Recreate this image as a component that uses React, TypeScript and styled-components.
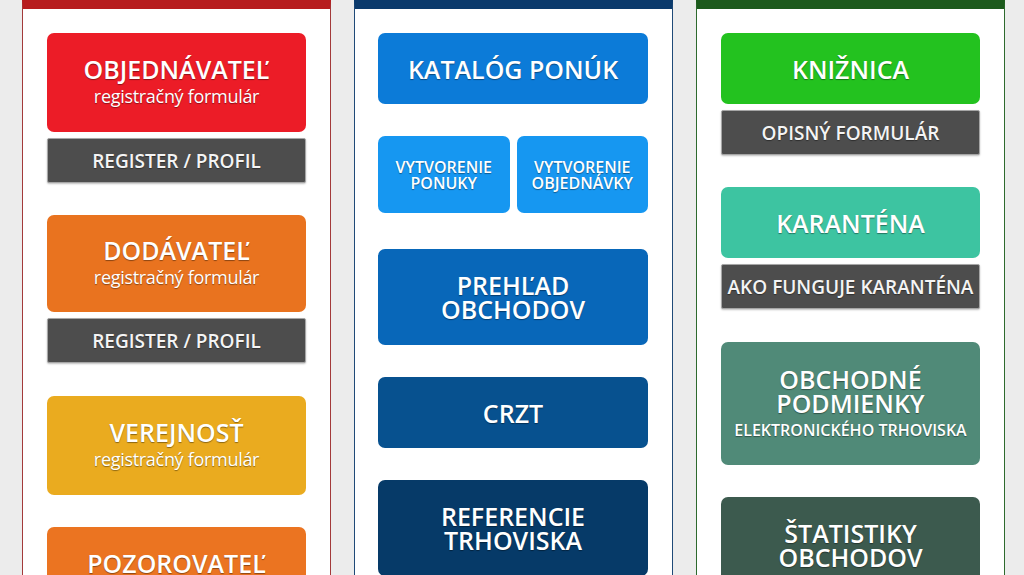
import styled, { createGlobalStyle } from "styled-components";

const GlobalStyle = createGlobalStyle`
  html, body {
    margin: 0;
    padding: 0;
    background: #ececec;
    font-family: "Open Sans", "Noto Sans", sans-serif;
    height: 575px;
    overflow: hidden;
  }
`;

type Tile = {
  title: string[];
  sub?: string;
  small?: string;
  bg: string;
  h: number;
  button?: string;
  gap?: number;
};

const leftTiles: Tile[] = [
  { title: ["OBJEDNÁVATEĽ"], sub: "registračný formulár", bg: "#ec1c27", h: 99, button: "REGISTER / PROFIL" },
  { title: ["DODÁVATEĽ"], sub: "registračný formulár", bg: "#e9731f", h: 97, button: "REGISTER / PROFIL" },
  { title: ["VEREJNOSŤ"], sub: "registračný formulár", bg: "#eaab1f", h: 99, gap: 33 },
  { title: ["POZOROVATEĽ"], sub: "registračný formulár", bg: "#eb7421", h: 99 },
];

const rightTiles: Tile[] = [
  { title: ["KNIŽNICA"], bg: "#23c21f", h: 71, button: "OPISNÝ FORMULÁR" },
  { title: ["KARANTÉNA"], bg: "#3dc4a1", h: 71, button: "AKO FUNGUJE KARANTÉNA" },
  { title: ["OBCHODNÉ", "PODMIENKY"], small: "ELEKTRONICKÉHO TRHOVISKA", bg: "#508a78", h: 123, gap: 33 },
  { title: ["ŠTATISTIKY", "OBCHODOV"], bg: "#3c5a4e", h: 96 },
];

const App = () => {
  return (
    <>
      <GlobalStyle />
      <Page>
        <Panel accent="#b71c1e" border="#a33a3a" width={309}>
          <Column>
            {leftTiles.map((t, i) => (
              <Group key={i} gap={i === 0 ? 0 : t.gap ?? 32}>
                <BigTile bg={t.bg} h={t.h} lift={t.sub ? 4 : 0}>
                  <Title>{t.title[0]}</Title>
                  {t.sub && <Sub>{t.sub}</Sub>}
                </BigTile>
                {t.button && <GrayButton>{t.button}</GrayButton>}
              </Group>
            ))}
          </Column>
        </Panel>

        <Panel accent="#0b3a6c" border="#1f4a78" width={319}>
          <Column wide>
            <Group gap={0}>
              <BigTile bg="#0c7bd8" h={71}>
                <Title>KATALÓG PONÚK</Title>
              </BigTile>
            </Group>
            <Group gap={32}>
              <SmallRow>
                <SmallTile>
                  VYTVORENIE
                  <br />
                  PONUKY
                </SmallTile>
                <SmallTile>
                  VYTVORENIE
                  <br />
                  OBJEDNÁVKY
                </SmallTile>
              </SmallRow>
            </Group>
            <Group gap={36}>
              <BigTile bg="#0867b9" h={96}>
                <Title tight>PREHĽAD</Title>
                <Title tight>OBCHODOV</Title>
              </BigTile>
            </Group>
            <Group gap={32}>
              <BigTile bg="#07518f" h={71}>
                <Title>CRZT</Title>
              </BigTile>
            </Group>
            <Group gap={32}>
              <BigTile bg="#063a68" h={96}>
                <Title tight>REFERENCIE</Title>
                <Title tight>TRHOVISKA</Title>
              </BigTile>
            </Group>
          </Column>
        </Panel>

        <Panel accent="#1c5a1c" border="#2d6a2d" width={309}>
          <Column>
            {rightTiles.map((t, i) => (
              <Group key={i} gap={i === 0 ? 0 : t.gap ?? 32}>
                <BigTile bg={t.bg} h={t.h}>
                  {t.title.map((line) => (
                    <Title key={line} tight={t.title.length > 1}>
                      {line}
                    </Title>
                  ))}
                  {t.small && <Small>{t.small}</Small>}
                </BigTile>
                {t.button && <GrayButton>{t.button}</GrayButton>}
              </Group>
            ))}
          </Column>
        </Panel>
      </Page>
    </>
  );
};
export default App;

const Page = styled.div`
  display: flex;
  gap: 23px;
  padding-left: 22px;
  height: 575px;
  overflow: hidden;
`;

const Panel = styled.div<{ accent: string; border: string; width: number }>`
  width: ${({ width }) => width}px;
  flex-shrink: 0;
  box-sizing: border-box;
  background: #fff;
  border-left: 1px solid ${({ border }) => border};
  border-right: 1px solid ${({ border }) => border};
  border-top: 9px solid ${({ accent }) => accent};
  height: 700px;
`;

const Column = styled.div<{ wide?: boolean }>`
  display: flex;
  flex-direction: column;
  padding: 24px ${({ wide }) => (wide ? "24px 0 23px" : "24px")};
`;

const Group = styled.div<{ gap: number }>`
  display: flex;
  flex-direction: column;
  margin-top: ${({ gap }) => gap}px;
`;

const BigTile = styled.div<{ bg: string; h: number; lift?: number }>`
  height: ${({ h }) => h}px;
  box-sizing: border-box;
  padding-bottom: ${({ lift }) => lift ?? 0}px;
  background: ${({ bg }) => bg};
  border-radius: 7px;
  display: flex;
  flex-direction: column;
  align-items: center;
  justify-content: center;
  color: #fff;
  text-shadow: 0 1px 1px rgba(0, 0, 0, 0.4);
`;

const Title = styled.div<{ tight?: boolean }>`
  font-size: 25px;
  font-weight: 600;
  line-height: ${({ tight }) => (tight ? "24px" : "30px")};
  white-space: nowrap;
`;

const Sub = styled.div`
  font-size: 18px;
  font-weight: 500;
  line-height: 24px;
  letter-spacing: -0.3px;
`;

const Small = styled.div`
  font-size: 16px;
  font-weight: 600;
  line-height: 20px;
  margin-top: 5px;
`;

const GrayButton = styled.div`
  margin-top: 6px;
  height: 45px;
  box-sizing: border-box;
  background: #4d4d4d;
  border: 1px solid #a6a6a6;
  border-radius: 2px;
  box-shadow: 0 1px 2px rgba(0, 0, 0, 0.25);
  display: flex;
  align-items: center;
  justify-content: center;
  color: #f4f4f4;
  font-size: 19px;
  font-weight: 600;
  white-space: nowrap;
  text-shadow: 0 1px 1px rgba(0, 0, 0, 0.4);
`;

const SmallRow = styled.div`
  display: grid;
  grid-template-columns: 1fr 1fr;
  gap: 7px;
`;

const SmallTile = styled.div`
  height: 77px;
  background: #1697f1;
  border-radius: 7px;
  display: flex;
  align-items: center;
  justify-content: center;
  text-align: center;
  color: #fff;
  font-size: 16px;
  font-weight: 600;
  line-height: 16px;
  text-shadow: 0 1px 1px rgba(0, 0, 0, 0.4);
`;
